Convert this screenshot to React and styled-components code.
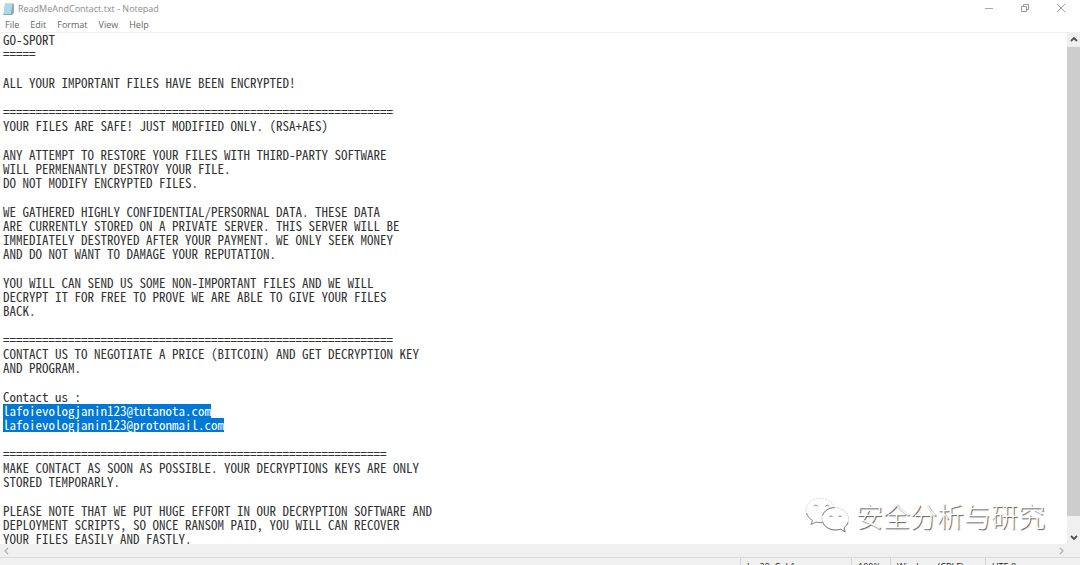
import React from 'react';
import styled, { createGlobalStyle } from 'styled-components';

const GlobalStyle = createGlobalStyle`
  * { box-sizing: border-box; }
  html, body { margin: 0; overflow: hidden; background: #fff; }
`;

const Window = styled.div`
  position: relative;
  display: flex;
  flex-direction: column;
  height: calc(100vh + 14px);
  background: #fff;
  font-family: 'Open Sans', 'Noto Sans', sans-serif;
`;

const TitleBar = styled.header`
  display: flex;
  align-items: center;
  height: 18px;
  padding: 0 1px 0 2px;
`;

const Title = styled.h1`
  flex: 1;
  margin: 0 0 0 3px;
  font-size: 9px;
  line-height: 18px;
  font-weight: 400;
  color: #8c8c8c;
`;

const CaptionButton = styled.button`
  display: flex;
  align-items: center;
  justify-content: center;
  width: 36px;
  height: 16px;
  align-self: flex-start;
  padding: 0;
  border: 0;
  background: transparent;
`;

const MenuBar = styled.nav`
  display: flex;
  height: 15px;
  padding-left: 5px;
  gap: 11px;
  border-bottom: 1px solid #f0f0f0;
`;

const MenuButton = styled.button`
  padding: 0;
  border: 0;
  background: transparent;
  font-family: inherit;
  font-size: 9px;
  line-height: 14px;
  color: #666;
`;

const Body = styled.main`
  display: flex;
  flex: 1;
  min-height: 0;
`;

const Editor = styled.div`
  flex: 1;
  min-width: 0;
  padding: 0 3px;
  overflow: hidden;
  outline: 0;
  font-family: 'Noto Sans Mono CJK SC', 'Liberation Mono', monospace;
  font-size: 13px;
  line-height: 14px;
  white-space: pre;
  color: #333;
`;

const Paragraph = styled.p`
  margin: 0 0 15px;
`;

const Selected = styled.mark`
  display: block;
  width: fit-content;
  background: #0078d7;
  color: #fff;
`;

const ScrollColumn = styled.div`
  display: flex;
  flex-direction: column;
  width: 13px;
  background: #f0f0f0;
`;

const ScrollRow = styled.div`
  display: flex;
  justify-content: space-between;
  height: 13px;
  padding-right: 13px;
  background: #f0f0f0;
`;

const ScrollButton = styled.button`
  display: flex;
  align-items: center;
  justify-content: center;
  width: 13px;
  height: 14px;
  padding: 0;
  border: 0;
  background: transparent;
`;

const Track = styled.div`
  flex: 1;
  padding-bottom: 14px;
`;

const Thumb = styled.div`
  height: 100%;
  background: #cdcdcd;
`;

const StatusBar = styled.footer`
  display: flex;
  justify-content: flex-end;
  height: 22px;
  border-top: 1px solid #dadada;
  background: #f0f0f0;
`;

const StatusCell = styled.span`
  width: ${(p) => p.$width}px;
  padding: 3px 0 0 6px;
  border-left: 1px solid #d4d4d4;
  font-size: 9px;
  line-height: 12px;
  color: #222;
`;

const Watermark = styled.div`
  position: absolute;
  right: 35px;
  bottom: 43px;
  display: flex;
  align-items: center;
  gap: 7px;
  font-family: 'Noto Sans CJK SC', sans-serif;
  font-size: 27px;
  line-height: 40px;
  font-weight: 300;
  color: #fff;
  text-shadow: 1px 1px 1px #555;
`;

const paths = {
  up: 'M2 6 5 3 8 6',
  down: 'M2 4 5 7 8 4',
  left: 'M6 2 3 5 6 8',
  right: 'M4 2 7 5 4 8',
};

function Arrow({ dir, light }) {
  return (
    <svg width="10" height="10" viewBox="0 0 10 10" fill="none" stroke={light ? '#b0b0b0' : '#505050'} strokeWidth={light ? 1.2 : 1.8} aria-hidden="true">
      <path d={paths[dir]} />
    </svg>
  );
}

function NotepadIcon() {
  return (
    <svg width="13" height="14" viewBox="0 0 13 14" aria-hidden="true">
      <path d="M3 1.5h8.5v9L10 13H1.5z" fill="#8fc4d2" />
      <path d="M3 2h7.5L9 12H1.5z" fill="#a9dbe6" />
      <path d="M10.5 2h1.3v9L9.5 13.2 9 12z" fill="#8ba5ab" />
      <path d="M3 1.7h8.5" stroke="#d9d2bd" strokeWidth="1" />
      <path d="M1.5 12.5h8" stroke="#7fa9b3" strokeWidth="1" />
    </svg>
  );
}

function WeChatLogo() {
  return (
    <svg width="45" height="40" viewBox="0 0 45 40" fill="none" aria-hidden="true">
      <path d="M7 28.5 8.5 24.5C4 21.5 2 18 2 14.5 2 7.5 8.5 2.5 16.5 2.5c7 0 12.5 3.5 14 9" stroke="#ccc" strokeWidth="0.7" strokeDasharray="2 1" />
      <path d="M2.5 17c1 3.5 3 5.5 6 7.5L7 28.5l5-2.5c2 .6 4 .8 6 .7" stroke="#888" strokeWidth="1" />
      <path d="M31.5 11.5c-8-.5-13.5 5-13.5 11.3 0 6.5 6 11.2 13.5 11.2 2 0 3.5-.3 5.2-.8l4.5 2.6-1.2-4c3-2.2 4.700-5.200 4.700-8.600 0-6.200-6-11.200-13.200-11.700z" fill="#fff" stroke="#ccc" strokeWidth="0.7" />
      <path d="M18.5 25.5c1.5 5 6.5 8.5 13 8.5 2 0 3.5-.3 5.2-.8l4.5 2.6-1.2-4c2-1.5 3.5-3.5 4-5.500M18.500 19.500c1.800-5 6.500-7.800 12-7.800" stroke="#777" strokeWidth="1" />
      <g stroke="#888" strokeWidth="1">
        <path d="M10 10.500a1.800 1.800 0 0 1 3.500 0M21.500 10.500a1.800 1.800 0 0 1 3.500 0M25.500 21a1.600 1.600 0 0 1 3 0M34.500 21a1.600 1.600 0 0 1 3 0" />
      </g>
    </svg>
  );
}

const paragraphs = [
  'GO-SPORT\n=====',
  'ALL YOUR IMPORTANT FILES HAVE BEEN ENCRYPTED!',
  `${'='.repeat(60)}\nYOUR FILES ARE SAFE! JUST MODIFIED ONLY. (RSA+AES)`,
  'ANY ATTEMPT TO RESTORE YOUR FILES WITH THIRD-PARTY SOFTWARE\nWILL PERMENANTLY DESTROY YOUR FILE.\nDO NOT MODIFY ENCRYPTED FILES.',
  'WE GATHERED HIGHLY CONFIDENTIAL/PERSORNAL DATA. THESE DATA\nARE CURRENTLY STORED ON A PRIVATE SERVER. THIS SERVER WILL BE\nIMMEDIATELY DESTROYED AFTER YOUR PAYMENT. WE ONLY SEEK MONEY\nAND DO NOT WANT TO DAMAGE YOUR REPUTATION.',
  'YOU WILL CAN SEND US SOME NON-IMPORTANT FILES AND WE WILL\nDECRYPT IT FOR FREE TO PROVE WE ARE ABLE TO GIVE YOUR FILES\nBACK.',
  `${'='.repeat(60)}\nCONTACT US TO NEGOTIATE A PRICE (BITCOIN) AND GET DECRYPTION KEY\nAND PROGRAM.`,
];

const closing = [
  `${'='.repeat(59)}\nMAKE CONTACT AS SOON AS POSSIBLE. YOUR DECRYPTIONS KEYS ARE ONLY\nSTORED TEMPORARLY.`,
  'PLEASE NOTE THAT WE PUT HUGE EFFORT IN OUR DECRYPTION SOFTWARE AND\nDEPLOYMENT SCRIPTS, SO ONCE RANSOM PAID, YOU WILL CAN RECOVER\nYOUR FILES EASILY AND FASTLY.',
];

export default function App() {
  return (
    <>
      <GlobalStyle />
      <Window>
        <TitleBar>
          <NotepadIcon />
          <Title>ReadMeAndContact.txt - Notepad</Title>
          <CaptionButton aria-label="Minimize">
            <svg width="10" height="10" viewBox="0 0 10 10" stroke="#aaa"><path d="M1 5.5h8" /></svg>
          </CaptionButton>
          <CaptionButton aria-label="Restore">
            <svg width="10" height="10" viewBox="0 0 10 10" fill="none" stroke="#999"><path d="M1.5 3.5h5v5h-5zM3.5 3.5v-2h5v5h-2" /></svg>
          </CaptionButton>
          <CaptionButton aria-label="Close">
            <svg width="10" height="10" viewBox="0 0 10 10" stroke="#999"><path d="M1 1l8 8M9 1l-8 8" /></svg>
          </CaptionButton>
        </TitleBar>
        <MenuBar aria-label="Menu">
          {['File', 'Edit', 'Format', 'View', 'Help'].map((m) => (
            <MenuButton key={m}>{m}</MenuButton>
          ))}
        </MenuBar>
        <Body>
          <Editor role="textbox" aria-multiline="true" aria-label="Text editor" contentEditable suppressContentEditableWarning spellCheck={false}>
            {paragraphs.map((p) => <Paragraph key={p}>{p}</Paragraph>)}
            <Paragraph as="div">
              Contact us :
              <Selected>lafoievologjanin123@tutanota.com</Selected>
              <Selected>lafoievologjanin123@protonmail.com</Selected>
            </Paragraph>
            {closing.map((p) => <Paragraph key={p}>{p}</Paragraph>)}
          </Editor>
          <ScrollColumn>
            <ScrollButton aria-label="Scroll up"><Arrow dir="up" /></ScrollButton>
            <Track><Thumb /></Track>
            <ScrollButton aria-label="Scroll down"><Arrow dir="down" /></ScrollButton>
          </ScrollColumn>
        </Body>
        <ScrollRow>
          <ScrollButton aria-label="Scroll left"><Arrow dir="left" light /></ScrollButton>
          <ScrollButton aria-label="Scroll right"><Arrow dir="right" light /></ScrollButton>
        </ScrollRow>
        <StatusBar>
          <StatusCell $width={111}>Ln 29, Col 1</StatusCell>
          <StatusCell $width={39}>100%</StatusCell>
          <StatusCell $width={95}>Windows (CRLF)</StatusCell>
          <StatusCell $width={95}>UTF-8</StatusCell>
        </StatusBar>
        <Watermark>
          <WeChatLogo />
          <span>安全分析与研究</span>
        </Watermark>
      </Window>
    </>
  );
}
